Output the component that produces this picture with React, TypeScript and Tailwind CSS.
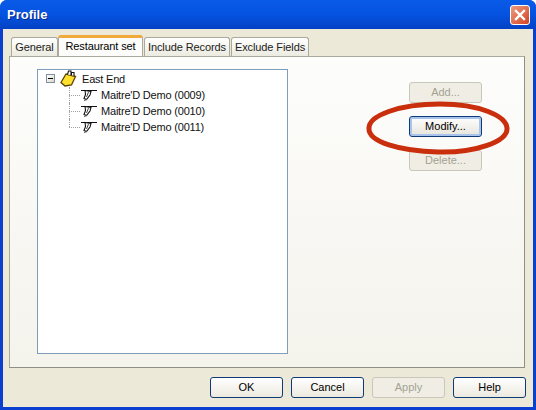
const sans = "font-['Liberation_Sans',Arial,sans-serif]";

function TabItem({ label, width, active }: { label: string; width: string; active?: boolean }) {
  if (active) {
    return (
      <div className={`relative z-10 ${width} h-[21px] -mt-[2px] bg-[#fcfcfa] border-x border-[#a9a99c] rounded-t-[3px] border-t-[3px] border-t-[#f0a93a] text-center text-[11px] leading-[16px] tracking-[-0.1px] whitespace-nowrap text-black`}>
        {label}
      </div>
    );
  }
  return (
    <div className={`${width} h-[19px] bg-gradient-to-b from-white to-[#ecebe0] border border-b-0 border-[#a9a99c] rounded-t-[3px] text-center text-[11px] leading-[19px] tracking-[-0.1px] whitespace-nowrap text-[#222]`}>
      {label}
    </div>
  );
}

function DlgButton({ label, disabled, focused, width = "w-[73px]" }: { label: string; disabled?: boolean; focused?: boolean; width?: string }) {
  let look = "border-[#0f3a78] text-black bg-gradient-to-b from-white to-[#ece9df]";
  if (disabled) look = "border-[#c9c7ba] text-[#a3a193] bg-[#f0eee4]";
  if (focused) look = "border-[#0f3a78] text-black bg-gradient-to-b from-white to-[#e6e4da] shadow-[inset_0_0_0_2px_#a9c4ec]";
  return (
    <div className={`${width} h-[21px] border rounded-[3px] text-center text-[11px] leading-[19px] ${look}`}>
      {label}
    </div>
  );
}

function PinIcon() {
  return (
    <svg width="18" height="12" viewBox="0 0 18 12" className="shrink-0" fill="none" stroke="#111" strokeWidth="1">
      <path d="M1 1.5H17" />
      <path d="M5 1.5L11 2.5L10 6L6.5 10.5L4 9.5L5.5 5.5Z" fill="#fff" strokeWidth="1.1" />
      <path d="M8.5 3L6.5 8" stroke="#444" />
      <path d="M4 11.5L7 10.5" stroke="#555" />
    </svg>
  );
}

function TreeChild({ label, last }: { label: string; last?: boolean }) {
  return (
    <div className="relative flex items-center h-[16px] pl-[32px]">
      <div className={`absolute left-[0px] top-0 w-0 border-l border-dotted border-[#a0a0a0] ${last ? "h-[8px]" : "h-[16px]"}`} />
      <div className="absolute left-[0px] top-[8px] w-[11px] border-t border-dotted border-[#a0a0a0]" />
      <div className="absolute left-[11px] top-[2px]">
        <PinIcon />
      </div>
      <span className="text-[11px] leading-[16px] tracking-[-0.2px] whitespace-nowrap text-[#111]">{label}</span>
    </div>
  );
}

export default function App() {
  return (
    <div className={`relative w-[536px] h-[410px] overflow-hidden rounded-t-[7px] bg-[#0a3fd0] ${sans}`}>
      {/* title bar */}
      <div className="h-[29px] bg-gradient-to-b from-[#0a5be8] via-[#0553e0] to-[#0441c4] flex items-center justify-between pl-[7px] pr-[6px]">
        <span className="text-[13px] font-bold text-white [text-shadow:1px_1px_#0a2a90]">Profile</span>
        <div className="w-[20px] h-[20px] rounded-[3px] border border-white bg-gradient-to-br from-[#ec9a80] to-[#d2401c] flex items-center justify-center">
          <svg width="12" height="12" viewBox="0 0 12 12" stroke="white" strokeWidth="2.4" strokeLinecap="square">
            <path d="M2 2L10 10M10 2L2 10" />
          </svg>
        </div>
      </div>

      {/* dialog body */}
      <div className="mx-[3px] mb-[3px] h-[378px] bg-[#ece9d8] pt-[8px] pl-[6px] pr-[8px]">
        <div className="flex pl-[2px] h-[19px] items-start">
          <TabItem label="General" width="w-[47px]" />
          <TabItem label="Restaurant set" width="w-[85px]" active />
          <div className="w-[1px]" />
          <TabItem label="Include Records" width="w-[86px]" />
          <div className="w-[1px]" />
          <TabItem label="Exclude Fields" width="w-[78px]" />
        </div>

        <div className="h-[312px] border border-[#a9a99c] border-b-[#8f8f84] border-r-[#8f8f84] bg-gradient-to-b from-[#fdfdfc] to-[#f4f3ec] pt-[12px] pl-[27px] flex">
          {/* tree */}
          <div className="w-[251px] h-[285px] border border-[#7f9db9] bg-white shrink-0">
            <div className="flex items-center h-[17px] pl-[8px]">
              <div className="w-[9px] h-[9px] border border-[#7f8fa0] bg-gradient-to-br from-white to-[#d8d8cc] flex items-center justify-center">
                <div className="w-[5px] h-px bg-black" />
              </div>
              <svg width="18" height="17" viewBox="0 0 18 17" className="ml-[5px] shrink-0">
                <path d="M1 12.5L6 4L15.5 6.5L11.5 15L5 16Z" fill="#ffe02e" stroke="#5a4300" strokeWidth="1.3" />
                <path d="M7.5 4.5L8.5 1H11V5M11.5 5V2.5H14V6" fill="#fff" stroke="#111" strokeWidth="1.1" />
              </svg>
              <span className="ml-[4px] text-[11px] leading-[16px] tracking-[-0.2px] text-[#111]">East End</span>
            </div>
            <div className="ml-[31px]">
              <TreeChild label="Maitre'D Demo (0009)" />
              <TreeChild label="Maitre'D Demo (0010)" />
              <TreeChild label="Maitre'D Demo (0011)" last />
            </div>
          </div>

          {/* side buttons */}
          <div className="ml-[121px] pt-[13px] flex flex-col gap-[13px]">
            <DlgButton label="Add..." disabled />
            <DlgButton label="Modify..." focused />
            <DlgButton label="Delete..." disabled />
          </div>
        </div>

        <div className="flex justify-end gap-[8px] pt-[9px] -mr-[1px]">
          <DlgButton label="OK" />
          <DlgButton label="Cancel" />
          <DlgButton label="Apply" disabled />
          <DlgButton label="Help" />
        </div>
      </div>

      {/* red annotation */}
      <svg className="absolute left-[362px] top-[96px]" width="152" height="64" viewBox="0 0 152 64" fill="none">
        <path
          d="M7 32C7 20 36 8 78 8C118 8 144 20 145 32C146 46 112 57 76 56C38 55 6 46 7 32Z"
          stroke="#c92f0c"
          strokeWidth="5"
        />
      </svg>
    </div>
  );
}
